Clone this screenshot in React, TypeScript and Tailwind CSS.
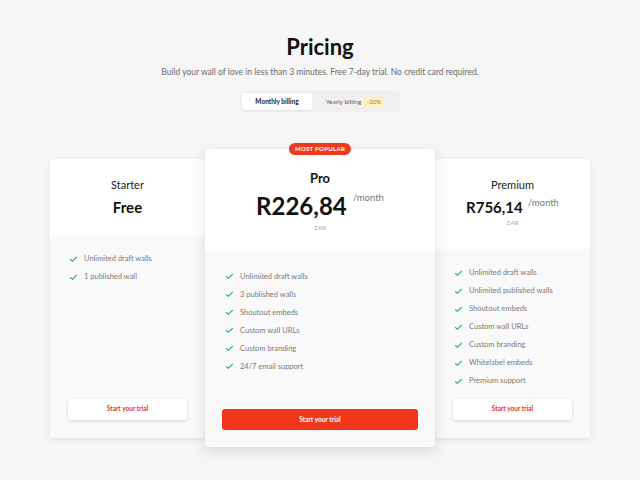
import { Check } from "lucide-react";

type Plan = {
  name: string;
  price: string;
  currency?: string;
  features: string[];
  popular?: boolean;
};

const plans: Plan[] = [
  {
    name: "Starter",
    price: "Free",
    features: ["Unlimited draft walls", "1 published wall"],
  },
  {
    name: "Pro",
    price: "R226,84",
    currency: "ZAR",
    popular: true,
    features: [
      "Unlimited draft walls",
      "3 published walls",
      "Shoutout embeds",
      "Custom wall URLs",
      "Custom branding",
      "24/7 email support",
    ],
  },
  {
    name: "Premium",
    price: "R756,14",
    currency: "ZAR",
    features: [
      "Unlimited draft walls",
      "Unlimited published walls",
      "Shoutout embeds",
      "Custom wall URLs",
      "Custom branding",
      "Whitelabel embeds",
      "Premium support",
    ],
  },
];

function FeatureList({ features }: { features: string[] }) {
  return (
    <ul className="flex flex-col gap-[9px]">
      {features.map((f) => (
        <li key={f} className="flex h-[9px] items-center gap-[6px]">
          <Check className="h-[9px] w-[9px] text-[#36b37e]" strokeWidth={3} />
          <span className="text-[7.5px] leading-none text-[#7a7a7a]">{f}</span>
        </li>
      ))}
    </ul>
  );
}

function SideCard({ plan }: { plan: Plan }) {
  return (
    <div className="flex h-[279px] w-[155px] flex-col overflow-hidden rounded-[4px] bg-[#f9f9f9] shadow-[0_2px_6px_rgba(0,0,0,0.08)]">
      <div
        className={`flex flex-col items-center bg-white pt-[19px] ${
          plan.currency ? "h-[90px]" : "h-[76px]"
        }`}
      >
        <div className="text-[11px] leading-[14px] text-[#222]">{plan.name}</div>
        <div className="mt-[5px] flex items-start">
          <span className="text-[15px] font-bold leading-[20px] text-[#111]">{plan.price}</span>
          {plan.currency && (
            <span className="ml-[5px] text-[9.5px] leading-[12px] text-[#777]">/month</span>
          )}
        </div>
        {plan.currency && (
          <div className="mt-[2px] text-[6.5px] leading-[8px] text-[#aaa]">{plan.currency}</div>
        )}
      </div>
      <div className="flex flex-1 flex-col px-[18px] pt-[20px] pb-[18px]">
        <div className="pl-[1px]">
          <FeatureList features={plan.features} />
        </div>
        <button className="mt-auto h-[21px] w-full rounded-[3px] bg-white text-[6.5px] font-bold text-[#e8321c] shadow-[0_1px_3px_rgba(0,0,0,0.18)]">
          Start your trial
        </button>
      </div>
    </div>
  );
}

function ProCard({ plan }: { plan: Plan }) {
  return (
    <div className="relative z-10 flex h-[298px] w-[230px] flex-col rounded-[4px] bg-[#f9f9f9] shadow-[0_4px_14px_rgba(0,0,0,0.13)]">
      <div className="absolute left-1/2 top-[-6px] -translate-x-1/2 rounded-full bg-[#ef3a1e] px-[6px] py-[2px] text-[6px] font-bold leading-[8px] tracking-[0.3px] text-white">
        MOST POPULAR
      </div>
      <div className="flex h-[102px] flex-col items-center rounded-t-[4px] bg-white pt-[21px]">
        <div className="text-[13px] font-bold leading-[16px] text-[#111]">{plan.name}</div>
        <div className="mt-[5px] flex items-start">
          <span className="text-[24px] font-bold leading-[30px] text-[#111]">{plan.price}</span>
          <span className="ml-[6px] text-[9.5px] leading-[14px] text-[#777]">/month</span>
        </div>
        <div className="mt-[3px] text-[6.5px] leading-[8px] text-[#aaa]">{plan.currency}</div>
      </div>
      <div className="flex flex-1 flex-col px-[17px] pt-[21px] pb-[17px]">
        <div className="pl-[3px]">
          <FeatureList features={plan.features} />
        </div>
        <button className="mt-auto h-[21px] w-full rounded-[3px] bg-[#f1361b] text-[6.5px] font-bold text-white">
          Start your trial
        </button>
      </div>
    </div>
  );
}

export default function App() {
  return (
    <div className="flex min-h-[480px] w-full flex-col items-center bg-[#f6f6f6] font-['Lato','Liberation_Sans',sans-serif]">
      <h1 className="mt-[34px] text-[22px] font-bold leading-[26px] text-[#111]">Pricing</h1>
      <p className="mt-[6px] text-[8.5px] leading-[12px] text-[#6b6b6b]">
        Build your wall of love in less than 3 minutes. Free 7-day trial. No credit card required.
      </p>
      <div className="mt-[13px] flex h-[21px] w-[160px] items-center rounded-[3px] bg-[#efefef] p-[2px]">
        <div className="flex h-full w-[70px] items-center justify-center rounded-[3px] bg-white text-[6.5px] font-bold text-[#222] shadow-[0_1px_2px_rgba(0,0,0,0.06)]">
          Monthly billing
        </div>
        <div className="flex flex-1 items-center justify-center gap-[3px] text-[6.5px] text-[#666]">
          <span>Yearly billing</span>
          <span className="rounded-[2px] bg-[#fdefc0] px-[3px] py-[2px] text-[6px] leading-[6px] text-[#b07d00]">-20%</span>
        </div>
      </div>
      <div className="mt-[37px] flex items-center">
        <SideCard plan={plans[0]} />
        <ProCard plan={plans[1]} />
        <SideCard plan={plans[2]} />
      </div>
    </div>
  );
}
